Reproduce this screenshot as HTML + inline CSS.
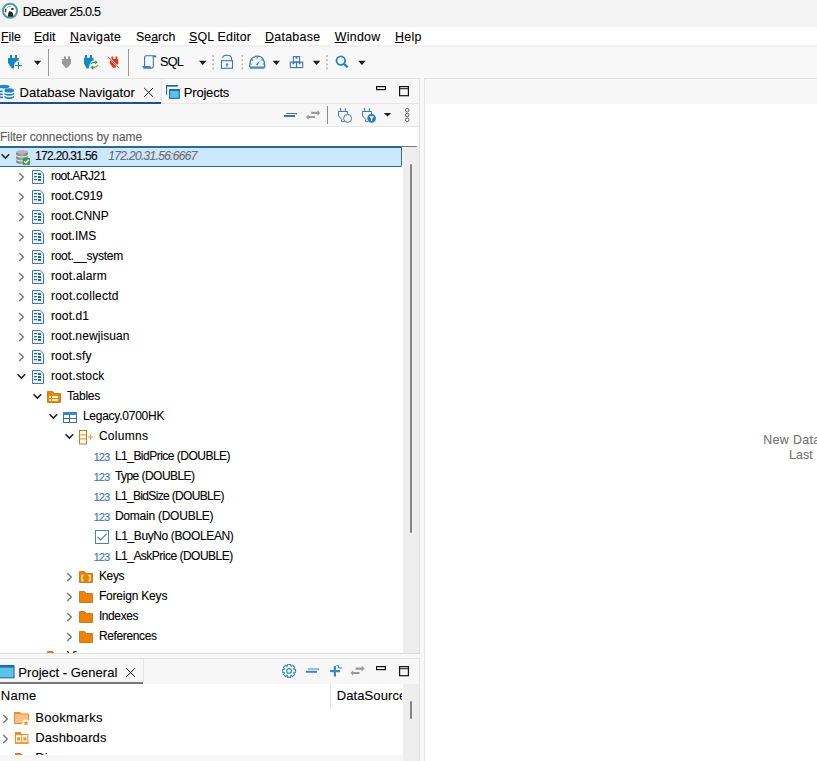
<!DOCTYPE html>
<html><head><meta charset="utf-8">
<style>
html,body{margin:0;padding:0;}
body{width:817px;height:761px;overflow:hidden;position:relative;background:#f8f8f8;font-family:"Liberation Sans",sans-serif;color:#1a1a1a;}
.a{position:absolute;}
.t{position:absolute;white-space:pre;font-size:12px;line-height:14px;-webkit-text-stroke:0.1px currentColor;}
.u{text-decoration:underline;text-underline-offset:1px;text-decoration-thickness:1px;}
svg{position:absolute;overflow:visible;}
</style></head><body>

<!-- Title bar -->
<div class="a" style="left:0;top:0;width:817px;height:27px;background:#f3f3f3;"></div>
<div class="a" style="left:0;top:26px;width:817px;height:1px;background:#f1f1f1;"></div>
<svg style="left:0;top:0" width="20" height="22" viewBox="0 0 20 22">
  <circle cx="10" cy="10.75" r="7" fill="#fff" stroke="#4a9fa8" stroke-width="2.1"/>
  <path d="M7.8 16.8 Q7.9 12.5 9.2 11.2 Q10.6 11 12.2 12.2 Q13.4 13 13.1 16.8 Z" fill="#2c2622"/>
  <ellipse cx="12.4" cy="8.9" rx="1.5" ry="0.9" fill="#262626"/>
  <path d="M4.9 9.2 L6.4 8.2 L6.2 12.6 L5 12 Z" fill="#3a3a3a"/>
  <path d="M7 7.6 Q8.5 6.2 10.8 6.4" fill="none" stroke="#9a9a9a" stroke-width="0.9"/>
</svg>
<div class="t" style="left:22.7px;top:4.8px;font-size:12.6px;letter-spacing:-0.7px;color:#000;">DBeaver 25.0.5</div>

<!-- Menu bar -->
<div class="a" style="left:0;top:27px;width:817px;height:18px;background:#fff;"></div>
<div class="t" style="left:1px;top:30px;font-size:12.4px;color:#000;"><span class="u">F</span>ile</div>
<div class="t" style="left:34px;top:30px;font-size:12.4px;color:#000;"><span class="u">E</span>dit</div>
<div class="t" style="left:70px;top:30px;font-size:12.4px;color:#000;letter-spacing:0.3px"><span class="u">N</span>avigate</div>
<div class="t" style="left:136px;top:30px;font-size:12.4px;color:#000;">Se<span class="u">a</span>rch</div>
<div class="t" style="left:189px;top:30px;font-size:12.4px;color:#000;letter-spacing:0.2px"><span class="u">S</span>QL Editor</div>
<div class="t" style="left:265px;top:30px;font-size:12.4px;color:#000;letter-spacing:0.3px"><span class="u">D</span>atabase</div>
<div class="t" style="left:334.7px;top:30px;font-size:12.4px;color:#000;letter-spacing:0.3px"><span class="u">W</span>indow</div>
<div class="t" style="left:395px;top:30px;font-size:12.4px;color:#000;letter-spacing:0.3px"><span class="u">H</span>elp</div>

<!-- Toolbar -->
<div class="a" style="left:0;top:45px;width:817px;height:2px;background:#f0f0f0;"></div>
<div class="a" style="left:0;top:47px;width:817px;height:31px;background:#f8f8f8;"></div>
<div class="a" style="left:0;top:78px;width:420px;height:1px;background:#e3e3e3;"></div>
<div class="a" style="left:424px;top:78px;width:393px;height:1px;background:#e3e3e3;"></div>
<div class="t" style="left:160px;top:55.3px;font-size:12.6px;letter-spacing:-0.7px;color:#000;">SQL</div>

<!-- Left top panel -->
<div class="a" style="left:0;top:79px;width:420px;height:575px;background:#f7f7f7;border-right:1px solid #e2e2e2;box-sizing:border-box;"></div>
<div class="a" style="left:0;top:103px;width:419px;height:1px;background:#e8e8e8;"></div>
<div class="a" style="left:0;top:126px;width:419px;height:1px;background:#e8e8e8;"></div>
<div class="a" style="left:0;top:102px;width:161px;height:2px;background:#1f4d96;"></div>
<div class="t" style="left:19.6px;top:85.5px;font-size:13px;letter-spacing:0.02px;color:#000;">Database Navigator</div>
<div class="t" style="left:183.8px;top:85.5px;font-size:13px;letter-spacing:-0.2px;color:#000;">Projects</div>
<!-- filter input -->
<div class="a" style="left:0;top:127px;width:417px;height:19px;background:#fff;border-bottom-right-radius:2px;"></div>
<div class="a" style="left:0;top:146px;width:417px;height:1px;background:#7c7c7c;border-radius:0 0 1px 0;"></div>
<div class="t" style="left:0;top:130px;font-size:12px;color:#5c5c5c;letter-spacing:-0.05px">Filter connections by name</div>
<!-- tree -->
<div class="a" style="left:0;top:147px;width:403px;height:506px;background:#fff;"></div>
<div class="a" style="left:-3px;top:146px;width:405px;height:21px;box-sizing:border-box;background:#cce8ff;border:1px solid #2e6792;border-top-width:2px;border-radius:2px;"></div>
<div class="a" style="left:0;top:147px;width:403px;height:506px;overflow:hidden;">
<div class="a" style="left:0;top:-147px;width:403px;height:800px;">
<svg style="left:-0.2px;top:151px" width="10" height="10" viewBox="0 0 10 10"><path d="M1.6 3.2 L5.4 7 L9.2 3.2" fill="none" stroke="#1e2a3a" stroke-width="1.6"/></svg>
<svg style="left:14px;top:149px" width="16" height="16" viewBox="0 0 16 16">
<defs><linearGradient id="dbg" x1="0" x2="1"><stop offset="0" stop-color="#7d7d7d"/><stop offset="0.5" stop-color="#a8a8a8"/><stop offset="1" stop-color="#7a7a7a"/></linearGradient></defs>
<ellipse cx="8" cy="2.8" rx="5.8" ry="1.8" fill="#b5b5b5"/>
<path d="M2.2 2.8 v2.6 a5.8 1.8 0 0 0 11.6 0 v-2.6 a5.8 1.8 0 0 1 -11.6 0z" fill="url(#dbg)"/>
<path d="M2.2 6.8 v2.6 a5.8 1.8 0 0 0 11.6 0 v-2.6 a5.8 1.8 0 0 1 -11.6 0z" fill="url(#dbg)"/>
<path d="M2.2 10.8 v2.4 a5.8 1.8 0 0 0 11.6 0 v-2.4 a5.8 1.8 0 0 1 -11.6 0z" fill="url(#dbg)"/>
<rect x="8.7" y="8.9" width="7.2" height="7" fill="#3e9b3e"/>
<path d="M10.2 12.4 L11.9 14 L14.6 10.7" fill="none" stroke="#fff" stroke-width="1.4"/>
</svg>
<div class="t" style="left:34.9px;top:146px;line-height:20px;font-size:12px;letter-spacing:-0.655px;color:#000;">172.20.31.56</div>
<div class="t" style="left:108.3px;top:146px;line-height:20px;font-size:12px;letter-spacing:-0.68px;color:#6a6a6a;font-style:italic;">172.20.31.56:6667</div>
<svg style="left:16.3px;top:172.2px" width="10" height="10" viewBox="0 0 10 10"><path d="M3.2 0.9 L7.3 5 L3.2 9.1" fill="none" stroke="#7b7b7b" stroke-width="1.45"/></svg>
<svg style="left:30px;top:169px" width="16" height="16" viewBox="0 0 16 16">
<path d="M2.5 1.5 H10.2 L13.5 4.8 V14.5 H2.5 Z" fill="#ecfbff" stroke="#4277a8" stroke-width="1"/>
<rect x="4" y="4" width="3" height="1.2" fill="#40607e"/><rect x="8" y="4" width="3" height="2" fill="#2070b8"/>
<rect x="4" y="7" width="3" height="1.2" fill="#40607e"/><rect x="8" y="7" width="3" height="2" fill="#3a5f80"/>
<rect x="4" y="10" width="3" height="1.2" fill="#40607e"/><rect x="8" y="10" width="3" height="2" fill="#2070b8"/>
</svg>
<div class="t" style="left:50.9px;top:166px;line-height:20px;font-size:12px;letter-spacing:-0.511px;color:#000;">root.ARJ21</div>
<svg style="left:16.3px;top:192.2px" width="10" height="10" viewBox="0 0 10 10"><path d="M3.2 0.9 L7.3 5 L3.2 9.1" fill="none" stroke="#7b7b7b" stroke-width="1.45"/></svg>
<svg style="left:30px;top:189px" width="16" height="16" viewBox="0 0 16 16">
<path d="M2.5 1.5 H10.2 L13.5 4.8 V14.5 H2.5 Z" fill="#ecfbff" stroke="#4277a8" stroke-width="1"/>
<rect x="4" y="4" width="3" height="1.2" fill="#40607e"/><rect x="8" y="4" width="3" height="2" fill="#2070b8"/>
<rect x="4" y="7" width="3" height="1.2" fill="#40607e"/><rect x="8" y="7" width="3" height="2" fill="#3a5f80"/>
<rect x="4" y="10" width="3" height="1.2" fill="#40607e"/><rect x="8" y="10" width="3" height="2" fill="#2070b8"/>
</svg>
<div class="t" style="left:50.9px;top:186px;line-height:20px;font-size:12px;letter-spacing:-0.1px;color:#000;">root.C919</div>
<svg style="left:16.3px;top:212.2px" width="10" height="10" viewBox="0 0 10 10"><path d="M3.2 0.9 L7.3 5 L3.2 9.1" fill="none" stroke="#7b7b7b" stroke-width="1.45"/></svg>
<svg style="left:30px;top:209px" width="16" height="16" viewBox="0 0 16 16">
<path d="M2.5 1.5 H10.2 L13.5 4.8 V14.5 H2.5 Z" fill="#ecfbff" stroke="#4277a8" stroke-width="1"/>
<rect x="4" y="4" width="3" height="1.2" fill="#40607e"/><rect x="8" y="4" width="3" height="2" fill="#2070b8"/>
<rect x="4" y="7" width="3" height="1.2" fill="#40607e"/><rect x="8" y="7" width="3" height="2" fill="#3a5f80"/>
<rect x="4" y="10" width="3" height="1.2" fill="#40607e"/><rect x="8" y="10" width="3" height="2" fill="#2070b8"/>
</svg>
<div class="t" style="left:50.9px;top:206px;line-height:20px;font-size:12px;letter-spacing:-0.025px;color:#000;">root.CNNP</div>
<svg style="left:16.3px;top:232.2px" width="10" height="10" viewBox="0 0 10 10"><path d="M3.2 0.9 L7.3 5 L3.2 9.1" fill="none" stroke="#7b7b7b" stroke-width="1.45"/></svg>
<svg style="left:30px;top:229px" width="16" height="16" viewBox="0 0 16 16">
<path d="M2.5 1.5 H10.2 L13.5 4.8 V14.5 H2.5 Z" fill="#ecfbff" stroke="#4277a8" stroke-width="1"/>
<rect x="4" y="4" width="3" height="1.2" fill="#40607e"/><rect x="8" y="4" width="3" height="2" fill="#2070b8"/>
<rect x="4" y="7" width="3" height="1.2" fill="#40607e"/><rect x="8" y="7" width="3" height="2" fill="#3a5f80"/>
<rect x="4" y="10" width="3" height="1.2" fill="#40607e"/><rect x="8" y="10" width="3" height="2" fill="#2070b8"/>
</svg>
<div class="t" style="left:50.9px;top:226px;line-height:20px;font-size:12px;letter-spacing:0.014px;color:#000;">root.IMS</div>
<svg style="left:16.3px;top:252.2px" width="10" height="10" viewBox="0 0 10 10"><path d="M3.2 0.9 L7.3 5 L3.2 9.1" fill="none" stroke="#7b7b7b" stroke-width="1.45"/></svg>
<svg style="left:30px;top:249px" width="16" height="16" viewBox="0 0 16 16">
<path d="M2.5 1.5 H10.2 L13.5 4.8 V14.5 H2.5 Z" fill="#ecfbff" stroke="#4277a8" stroke-width="1"/>
<rect x="4" y="4" width="3" height="1.2" fill="#40607e"/><rect x="8" y="4" width="3" height="2" fill="#2070b8"/>
<rect x="4" y="7" width="3" height="1.2" fill="#40607e"/><rect x="8" y="7" width="3" height="2" fill="#3a5f80"/>
<rect x="4" y="10" width="3" height="1.2" fill="#40607e"/><rect x="8" y="10" width="3" height="2" fill="#2070b8"/>
</svg>
<div class="t" style="left:50.9px;top:246px;line-height:20px;font-size:12px;letter-spacing:-0.25px;color:#000;">root.__system</div>
<svg style="left:16.3px;top:272.2px" width="10" height="10" viewBox="0 0 10 10"><path d="M3.2 0.9 L7.3 5 L3.2 9.1" fill="none" stroke="#7b7b7b" stroke-width="1.45"/></svg>
<svg style="left:30px;top:269px" width="16" height="16" viewBox="0 0 16 16">
<path d="M2.5 1.5 H10.2 L13.5 4.8 V14.5 H2.5 Z" fill="#ecfbff" stroke="#4277a8" stroke-width="1"/>
<rect x="4" y="4" width="3" height="1.2" fill="#40607e"/><rect x="8" y="4" width="3" height="2" fill="#2070b8"/>
<rect x="4" y="7" width="3" height="1.2" fill="#40607e"/><rect x="8" y="7" width="3" height="2" fill="#3a5f80"/>
<rect x="4" y="10" width="3" height="1.2" fill="#40607e"/><rect x="8" y="10" width="3" height="2" fill="#2070b8"/>
</svg>
<div class="t" style="left:50.9px;top:266px;line-height:20px;font-size:12px;letter-spacing:0.211px;color:#000;">root.alarm</div>
<svg style="left:16.3px;top:292.2px" width="10" height="10" viewBox="0 0 10 10"><path d="M3.2 0.9 L7.3 5 L3.2 9.1" fill="none" stroke="#7b7b7b" stroke-width="1.45"/></svg>
<svg style="left:30px;top:289px" width="16" height="16" viewBox="0 0 16 16">
<path d="M2.5 1.5 H10.2 L13.5 4.8 V14.5 H2.5 Z" fill="#ecfbff" stroke="#4277a8" stroke-width="1"/>
<rect x="4" y="4" width="3" height="1.2" fill="#40607e"/><rect x="8" y="4" width="3" height="2" fill="#2070b8"/>
<rect x="4" y="7" width="3" height="1.2" fill="#40607e"/><rect x="8" y="7" width="3" height="2" fill="#3a5f80"/>
<rect x="4" y="10" width="3" height="1.2" fill="#40607e"/><rect x="8" y="10" width="3" height="2" fill="#2070b8"/>
</svg>
<div class="t" style="left:50.9px;top:286px;line-height:20px;font-size:12px;letter-spacing:0.242px;color:#000;">root.collectd</div>
<svg style="left:16.3px;top:312.2px" width="10" height="10" viewBox="0 0 10 10"><path d="M3.2 0.9 L7.3 5 L3.2 9.1" fill="none" stroke="#7b7b7b" stroke-width="1.45"/></svg>
<svg style="left:30px;top:309px" width="16" height="16" viewBox="0 0 16 16">
<path d="M2.5 1.5 H10.2 L13.5 4.8 V14.5 H2.5 Z" fill="#ecfbff" stroke="#4277a8" stroke-width="1"/>
<rect x="4" y="4" width="3" height="1.2" fill="#40607e"/><rect x="8" y="4" width="3" height="2" fill="#2070b8"/>
<rect x="4" y="7" width="3" height="1.2" fill="#40607e"/><rect x="8" y="7" width="3" height="2" fill="#3a5f80"/>
<rect x="4" y="10" width="3" height="1.2" fill="#40607e"/><rect x="8" y="10" width="3" height="2" fill="#2070b8"/>
</svg>
<div class="t" style="left:50.9px;top:306px;line-height:20px;font-size:12px;letter-spacing:0.133px;color:#000;">root.d1</div>
<svg style="left:16.3px;top:332.2px" width="10" height="10" viewBox="0 0 10 10"><path d="M3.2 0.9 L7.3 5 L3.2 9.1" fill="none" stroke="#7b7b7b" stroke-width="1.45"/></svg>
<svg style="left:30px;top:329px" width="16" height="16" viewBox="0 0 16 16">
<path d="M2.5 1.5 H10.2 L13.5 4.8 V14.5 H2.5 Z" fill="#ecfbff" stroke="#4277a8" stroke-width="1"/>
<rect x="4" y="4" width="3" height="1.2" fill="#40607e"/><rect x="8" y="4" width="3" height="2" fill="#2070b8"/>
<rect x="4" y="7" width="3" height="1.2" fill="#40607e"/><rect x="8" y="7" width="3" height="2" fill="#3a5f80"/>
<rect x="4" y="10" width="3" height="1.2" fill="#40607e"/><rect x="8" y="10" width="3" height="2" fill="#2070b8"/>
</svg>
<div class="t" style="left:50.9px;top:326px;line-height:20px;font-size:12px;letter-spacing:0.092px;color:#000;">root.newjisuan</div>
<svg style="left:16.3px;top:352.2px" width="10" height="10" viewBox="0 0 10 10"><path d="M3.2 0.9 L7.3 5 L3.2 9.1" fill="none" stroke="#7b7b7b" stroke-width="1.45"/></svg>
<svg style="left:30px;top:349px" width="16" height="16" viewBox="0 0 16 16">
<path d="M2.5 1.5 H10.2 L13.5 4.8 V14.5 H2.5 Z" fill="#ecfbff" stroke="#4277a8" stroke-width="1"/>
<rect x="4" y="4" width="3" height="1.2" fill="#40607e"/><rect x="8" y="4" width="3" height="2" fill="#2070b8"/>
<rect x="4" y="7" width="3" height="1.2" fill="#40607e"/><rect x="8" y="7" width="3" height="2" fill="#3a5f80"/>
<rect x="4" y="10" width="3" height="1.2" fill="#40607e"/><rect x="8" y="10" width="3" height="2" fill="#2070b8"/>
</svg>
<div class="t" style="left:50.9px;top:346px;line-height:20px;font-size:12px;letter-spacing:0.171px;color:#000;">root.sfy</div>
<svg style="left:15.8px;top:371px" width="10" height="10" viewBox="0 0 10 10"><path d="M1.6 3.2 L5.4 7 L9.2 3.2" fill="none" stroke="#222" stroke-width="1.6"/></svg>
<svg style="left:30px;top:369px" width="16" height="16" viewBox="0 0 16 16">
<path d="M2.5 1.5 H10.2 L13.5 4.8 V14.5 H2.5 Z" fill="#ecfbff" stroke="#4277a8" stroke-width="1"/>
<rect x="4" y="4" width="3" height="1.2" fill="#40607e"/><rect x="8" y="4" width="3" height="2" fill="#2070b8"/>
<rect x="4" y="7" width="3" height="1.2" fill="#40607e"/><rect x="8" y="7" width="3" height="2" fill="#3a5f80"/>
<rect x="4" y="10" width="3" height="1.2" fill="#40607e"/><rect x="8" y="10" width="3" height="2" fill="#2070b8"/>
</svg>
<div class="t" style="left:50.9px;top:366px;line-height:20px;font-size:12px;letter-spacing:0.156px;color:#000;">root.stock</div>
<svg style="left:31.8px;top:391px" width="10" height="10" viewBox="0 0 10 10"><path d="M1.6 3.2 L5.4 7 L9.2 3.2" fill="none" stroke="#222" stroke-width="1.6"/></svg>
<svg style="left:46px;top:389px" width="16" height="16" viewBox="0 0 16 16">
<path d="M1.5 2.5 H6.5 L8.2 4.5 H14.5 V13.5 H1.5 Z" fill="#ef8300" stroke="#c97a35" stroke-width="1"/>
<rect x="3" y="7" width="2" height="2" fill="#fff6c8"/><rect x="6" y="7" width="6" height="2" fill="#fffbe8"/><rect x="3" y="10" width="2" height="2" fill="#fff6b0"/><rect x="6" y="10" width="6" height="2" fill="#fff6c0"/></svg>
<div class="t" style="left:66.9px;top:386px;line-height:20px;font-size:12px;letter-spacing:-0.28px;color:#000;">Tables</div>
<svg style="left:47.8px;top:411px" width="10" height="10" viewBox="0 0 10 10"><path d="M1.6 3.2 L5.4 7 L9.2 3.2" fill="none" stroke="#222" stroke-width="1.6"/></svg>
<svg style="left:62px;top:409px" width="16" height="16" viewBox="0 0 16 16">
<rect x="1.5" y="3.5" width="13" height="10" fill="#fff" stroke="#3a72a8" stroke-width="1"/>
<rect x="1" y="3" width="14" height="3" fill="#3b87c6"/>
<path d="M7.5 6 V14 M1.5 9.5 H14.5" stroke="#3a72a8" stroke-width="1"/>
</svg>
<div class="t" style="left:82.9px;top:406px;line-height:20px;font-size:12px;letter-spacing:-0.25px;color:#000;">Legacy.0700HK</div>
<svg style="left:63.8px;top:431px" width="10" height="10" viewBox="0 0 10 10"><path d="M1.6 3.2 L5.4 7 L9.2 3.2" fill="none" stroke="#222" stroke-width="1.6"/></svg>
<svg style="left:78px;top:429px" width="16" height="16" viewBox="0 0 16 16">
<rect x="1.5" y="1.5" width="7" height="13.5" fill="#fffbe6" stroke="#c27c38" stroke-width="1"/>
<rect x="2" y="5" width="6" height="1.6" fill="#f2b47a"/><rect x="2" y="9" width="6" height="1.6" fill="#f2b47a"/>
<path d="M10 8 H15 M12.5 5.2 V10.8" stroke="#f0962e" stroke-width="1.1"/>
</svg>
<div class="t" style="left:98.9px;top:426px;line-height:20px;font-size:12px;letter-spacing:0.283px;color:#000;">Columns</div>
<div class="t" style="left:93.7px;top:450px;font-size:10.6px;line-height:14px;color:#3b79b2;letter-spacing:-0.55px;-webkit-text-stroke:0.15px #3b79b2;">123</div>
<div class="t" style="left:114.9px;top:446px;line-height:20px;font-size:12px;letter-spacing:-0.511px;color:#000;">L1_BidPrice (DOUBLE)</div>
<div class="t" style="left:93.7px;top:470px;font-size:10.6px;line-height:14px;color:#3b79b2;letter-spacing:-0.55px;-webkit-text-stroke:0.15px #3b79b2;">123</div>
<div class="t" style="left:114.9px;top:466px;line-height:20px;font-size:12px;letter-spacing:-0.542px;color:#000;">Type (DOUBLE)</div>
<div class="t" style="left:93.7px;top:490px;font-size:10.6px;line-height:14px;color:#3b79b2;letter-spacing:-0.55px;-webkit-text-stroke:0.15px #3b79b2;">123</div>
<div class="t" style="left:114.9px;top:486px;line-height:20px;font-size:12px;letter-spacing:-0.656px;color:#000;">L1_BidSize (DOUBLE)</div>
<div class="t" style="left:93.7px;top:510px;font-size:10.6px;line-height:14px;color:#3b79b2;letter-spacing:-0.55px;-webkit-text-stroke:0.15px #3b79b2;">123</div>
<div class="t" style="left:114.9px;top:506px;line-height:20px;font-size:12px;letter-spacing:-0.236px;color:#000;">Domain (DOUBLE)</div>
<svg style="left:94px;top:529px" width="16" height="16" viewBox="0 0 16 16">
<rect x="1.5" y="1.5" width="13" height="13" fill="#fdfeff" stroke="#4a82b2" stroke-width="1"/>
<path d="M3.6 7.8 L6.6 11 L12.8 4.6" fill="none" stroke="#4a82b2" stroke-width="1.1"/>
</svg>
<div class="t" style="left:114.9px;top:526px;line-height:20px;font-size:12px;letter-spacing:-0.382px;color:#000;">L1_BuyNo (BOOLEAN)</div>
<div class="t" style="left:93.7px;top:550px;font-size:10.6px;line-height:14px;color:#3b79b2;letter-spacing:-0.55px;-webkit-text-stroke:0.15px #3b79b2;">123</div>
<div class="t" style="left:114.9px;top:546px;line-height:20px;font-size:12px;letter-spacing:-0.511px;color:#000;">L1_AskPrice (DOUBLE)</div>
<svg style="left:64.3px;top:572.2px" width="10" height="10" viewBox="0 0 10 10"><path d="M3.2 0.9 L7.3 5 L3.2 9.1" fill="none" stroke="#7b7b7b" stroke-width="1.45"/></svg>
<svg style="left:78px;top:569px" width="16" height="16" viewBox="0 0 16 16">
<path d="M1.5 2.5 H6.5 L8.2 4.5 H14.5 V13.5 H1.5 Z" fill="#ef8300" stroke="#c97a35" stroke-width="1"/>
<path d="M5.5 6.5 H4 V11.5 H5.5 M10.5 6.5 H12 V11.5 H10.5" fill="none" stroke="#fff6b8" stroke-width="1.3"/></svg>
<div class="t" style="left:98.9px;top:566px;line-height:20px;font-size:12px;letter-spacing:-0.333px;color:#000;">Keys</div>
<svg style="left:64.3px;top:592.2px" width="10" height="10" viewBox="0 0 10 10"><path d="M3.2 0.9 L7.3 5 L3.2 9.1" fill="none" stroke="#7b7b7b" stroke-width="1.45"/></svg>
<svg style="left:78px;top:589px" width="16" height="16" viewBox="0 0 16 16">
<path d="M1.5 2.5 H6.5 L8.2 4.5 H14.5 V13.5 H1.5 Z" fill="#ef8300" stroke="#c97a35" stroke-width="1"/>
</svg>
<div class="t" style="left:98.9px;top:586px;line-height:20px;font-size:12px;letter-spacing:-0.2px;color:#000;">Foreign Keys</div>
<svg style="left:64.3px;top:612.2px" width="10" height="10" viewBox="0 0 10 10"><path d="M3.2 0.9 L7.3 5 L3.2 9.1" fill="none" stroke="#7b7b7b" stroke-width="1.45"/></svg>
<svg style="left:78px;top:609px" width="16" height="16" viewBox="0 0 16 16">
<path d="M1.5 2.5 H6.5 L8.2 4.5 H14.5 V13.5 H1.5 Z" fill="#ef8300" stroke="#c97a35" stroke-width="1"/>
</svg>
<div class="t" style="left:98.9px;top:606px;line-height:20px;font-size:12px;letter-spacing:-0.4px;color:#000;">Indexes</div>
<svg style="left:64.3px;top:632.2px" width="10" height="10" viewBox="0 0 10 10"><path d="M3.2 0.9 L7.3 5 L3.2 9.1" fill="none" stroke="#7b7b7b" stroke-width="1.45"/></svg>
<svg style="left:78px;top:629px" width="16" height="16" viewBox="0 0 16 16">
<path d="M1.5 2.5 H6.5 L8.2 4.5 H14.5 V13.5 H1.5 Z" fill="#ef8300" stroke="#c97a35" stroke-width="1"/>
</svg>
<div class="t" style="left:98.9px;top:626px;line-height:20px;font-size:12px;letter-spacing:-0.356px;color:#000;">References</div>
<svg style="left:46px;top:649px" width="16" height="16" viewBox="0 0 16 16">
<path d="M1.5 2.5 H6.5 L8.2 4.5 H14.5 V13.5 H1.5 Z" fill="#ef8300" stroke="#c97a35" stroke-width="1"/>
</svg>
<div class="t" style="left:66.9px;top:646px;line-height:20px;font-size:12px;letter-spacing:-0.2px;color:#000;">Views</div>
</div></div>
<div class="a" style="left:403px;top:147px;width:16px;height:506px;background:#eeeeee;"></div>
<div class="a" style="left:410px;top:164px;width:2px;height:369px;background:#858585;border-radius:1px;"></div>
<div class="a" style="left:0;top:653px;width:420px;height:1px;background:#dcdcdc;"></div>

<!-- Right panel -->
<div class="a" style="left:424px;top:79px;width:393px;height:682px;background:#fff;border-left:1px solid #e4e4e4;box-sizing:border-box;"></div>
<div class="a" style="left:425px;top:79px;width:392px;height:25px;background:#f7f7f7;"></div>
<div class="t" style="left:763.3px;top:432.5px;font-size:12.4px;letter-spacing:0.35px;color:#737373;">New Data</div>
<div class="t" style="left:789px;top:447.5px;font-size:12.4px;letter-spacing:0.1px;color:#737373;">Last</div>

<!-- Bottom left panel -->
<div class="a" style="left:0;top:658px;width:420px;height:103px;background:#f7f7f7;border-top:1px solid #e2e2e2;border-right:1px solid #e2e2e2;box-sizing:border-box;"></div>
<div class="a" style="left:0;top:682px;width:143px;height:2px;background:#777;"></div>
<div class="t" style="left:18.3px;top:666.2px;font-size:13px;letter-spacing:0.05px;color:#000;">Project - General</div>

<div class="a" style="left:0;top:684px;width:403px;height:71px;background:#fff;overflow:hidden;">
<div class="a" style="left:0;top:-684px;width:403px;height:800px;">
<svg style="left:0px;top:714.2px" width="10" height="10" viewBox="0 0 10 10"><path d="M3.2 0.9 L7.3 5 L3.2 9.1" fill="none" stroke="#7b7b7b" stroke-width="1.45"/></svg>
<svg style="left:14px;top:711px" width="16" height="16" viewBox="0 0 16 16">
<path d="M0.5 1.5 H5.5 L7 3 H14.5 V12.5 H0.5 Z" fill="#ffc08a" stroke="#f08a24" stroke-width="1"/>
<path d="M0.5 1 H6 L7.5 3 H1 Z" fill="#f08a24"/>
<circle cx="12" cy="12" r="3.6" fill="#fff"/>
<path d="M12 9.2 L12.8 11.2 L14.8 11.3 L13.2 12.5 L13.8 14.6 L12 13.4 L10.2 14.6 L10.8 12.5 L9.2 11.3 L11.2 11.2 Z" fill="#f08a24"/>
</svg>
<div class="t" style="left:35.2px;top:708.2px;line-height:20px;font-size:13px;letter-spacing:0.287px;color:#000;">Bookmarks</div>
<svg style="left:0px;top:734.2px" width="10" height="10" viewBox="0 0 10 10"><path d="M3.2 0.9 L7.3 5 L3.2 9.1" fill="none" stroke="#7b7b7b" stroke-width="1.45"/></svg>
<svg style="left:14px;top:731px" width="16" height="16" viewBox="0 0 16 16">
<rect x="1" y="1" width="6.3" height="2.6" fill="#f08a24"/>
<rect x="1.5" y="3.5" width="12.4" height="8.6" fill="#fffbe6" stroke="#f08a24" stroke-width="1"/>
<rect x="1" y="11.3" width="13.4" height="1.4" fill="#f08a24"/>
<path d="M7.7 4 V11.5" stroke="#f08a24" stroke-width="1"/>
<rect x="3" y="6.3" width="3" height="3.2" fill="#f09030"/>
<rect x="9.3" y="6.3" width="3" height="3.2" fill="#f09030"/>
</svg>
<div class="t" style="left:35.2px;top:728.2px;line-height:20px;font-size:13px;letter-spacing:0.133px;color:#000;">Dashboards</div>
<svg style="left:14px;top:751px" width="16" height="16" viewBox="0 0 16 16">
<path d="M1.5 2.5 H6.5 L8.2 4.5 H14.5 V13.5 H1.5 Z" fill="#ef8300" stroke="#c97a35" stroke-width="1"/>
</svg>
<div class="t" style="left:35.2px;top:748.2px;line-height:20px;font-size:13px;letter-spacing:0.2px;color:#000;">Diagrams</div>
<div class="a" style="left:330px;top:684px;width:1px;height:24px;background:#e2e2e2;"></div>
<div class="t" style="left:0.8px;top:689.2px;font-size:13px;letter-spacing:0.27px;color:#000;">Name</div>
<div class="a" style="left:336.7px;top:684px;width:65px;height:24px;overflow:hidden;"><div class="t" style="left:0;top:5.2px;font-size:13px;letter-spacing:0.1px;color:#000;">DataSource</div></div>
</div></div>
<div class="a" style="left:403px;top:684px;width:16px;height:77px;background:#eeeeee;"></div>
<div class="a" style="left:410px;top:701px;width:2px;height:18px;background:#858585;border-radius:1px;"></div>

<svg style="left:0;top:0" width="817" height="761" viewBox="0 0 817 761">
<!-- main toolbar -->
<!-- plug + -->
<g fill="#1287c9">
  <rect x="10" y="55" width="2" height="3.2"/><rect x="15" y="55" width="2" height="3.2"/>
  <path d="M8 58 H18.8 V60.2 Q15.2 61.2 14.2 64.5 L13.8 68.6 H11.8 L8 63 Z"/>
</g>
<path d="M15 65.5 H22 M18.5 62 V69" stroke="#2a9a44" stroke-width="1.1" fill="none"/>
<path d="M33.8 60.8 H41.2 L37.5 65 Z" fill="#1b1b1b"/>
<rect x="48" y="49" width="1" height="27" fill="#9a9a9a"/>
<!-- gray plug -->
<g fill="#9a9a9a">
  <rect x="64" y="56.3" width="2" height="3"/><rect x="68" y="56.3" width="2" height="3"/>
  <path d="M62 59 H71 V63.5 L67.5 67.7 H65.5 L62 63.5 Z"/>
</g>
<!-- blue plug refresh -->
<g fill="#1287c9">
  <rect x="85" y="55" width="2" height="3"/><rect x="90" y="55" width="2" height="3"/>
  <path d="M84 57.7 H93.6 V60 Q90.5 61 89.6 64.5 L88.7 68.6 H86.7 L84 63.5 Z"/>
</g>
<g stroke="#2a9a44" stroke-width="1.05" fill="none">
  <path d="M90.5 64.3 Q92 62.2 96.5 62.3"/><path d="M95 60.8 L97 62.3 L95 63.8"/>
  <path d="M97.8 65.3 Q96.5 67.6 91.8 67.5"/><path d="M93.3 66 L91.3 67.5 L93.3 69"/>
</g>
<!-- red plug disconnect -->
<g fill="#e8321e">
  <rect x="111.4" y="56.5" width="1.8" height="3"/><rect x="115.5" y="56.5" width="1.8" height="3"/>
  <path d="M109.8 59 H118.3 V63.5 L115.5 67.7 H113 L109.8 63.5 Z"/>
</g>
<path d="M108 56.6 L119.2 68.2" stroke="#f8f8f8" stroke-width="1.7"/>
<path d="M108 56.6 L119.2 68.2" stroke="#6e3a34" stroke-width="0.8"/>
<rect x="128" y="49" width="1" height="27" fill="#9a9a9a"/>
<!-- SQL scroll -->
<g fill="none" stroke="#3a78b0" stroke-width="1.1">
  <path d="M144.6 66.5 V57 Q144.6 55.7 146 55.7 H155.2 L155.8 56.6 H153.3 V66 Q153.3 68.2 151.5 68.2 Q150.2 68.2 149.8 66.5"/>
</g>
<path d="M142.2 66 H150 Q150.3 67.5 151.4 68.8 H143.5 Z" fill="#3a80bc"/>
<path d="M199 60.8 H206.4 L202.7 65 Z" fill="#1b1b1b"/>
<g fill="#ababab">
  <rect x="212.3" y="55.2" width="1.6" height="1.6"/><rect x="212.3" y="59.4" width="1.6" height="1.6"/><rect x="212.3" y="63.5" width="1.6" height="1.6"/><rect x="212.3" y="67.6" width="1.6" height="1.6"/>
  <rect x="241.5" y="55.2" width="1.6" height="1.6"/><rect x="241.5" y="59.4" width="1.6" height="1.6"/><rect x="241.5" y="63.5" width="1.6" height="1.6"/><rect x="241.5" y="67.6" width="1.6" height="1.6"/>
  <rect x="326.1" y="55.2" width="1.6" height="1.6"/><rect x="326.1" y="59.4" width="1.6" height="1.6"/><rect x="326.1" y="63.5" width="1.6" height="1.6"/><rect x="326.1" y="67.6" width="1.6" height="1.6"/>
</g>
<!-- lock -->
<g fill="none" stroke="#3a78b0" stroke-width="1.1">
  <rect x="221.5" y="60.7" width="11" height="7.6"/>
  <path d="M222.6 58 Q223 55.2 227 55.2 Q231.5 55.2 231.6 58.5 V60.7"/>
</g>
<path d="M227 63 L225.3 64.8 H226.4 V67 H227.6 V64.8 H228.7 Z" fill="#3a80bc"/>
<!-- gauge -->
<g fill="none" stroke="#3a78b0" stroke-width="1.2">
  <path d="M249.7 67 Q249.5 56.2 257.2 56.2 Q265 56.2 264.8 67 Z"/>
  <path d="M257.2 57 V58.5 M252 59.5 L253 60.5 M262.5 59.5 L261.5 60.5 M250.5 64 H252 M264 64 H262.5"/>
</g>
<path d="M255.8 64.6 L260.2 60.5 L257.6 65.3 Z" fill="#3a78b0"/>
<rect x="250" y="67.2" width="14.5" height="1.5" fill="#3a80bc"/>
<path d="M272.6 60.8 H280 L276.3 65 Z" fill="#1b1b1b"/>
<!-- boxes -->
<g fill="none" stroke="#3a78b0" stroke-width="1.1">
  <rect x="293.4" y="56.6" width="6.2" height="5.5"/><rect x="290.3" y="62.1" width="6.2" height="5.5"/><rect x="296.5" y="62.1" width="6.2" height="5.5"/>
</g>
<path d="M295.6 56.8 h1.8 v2 h-1.8z M292.5 62.3 h1.8 v2 h-1.8z M298.7 62.3 h1.8 v2 h-1.8z" fill="#3a78b0"/>
<path d="M312.8 60.8 H320.2 L316.5 65 Z" fill="#1b1b1b"/>
<!-- search -->
<circle cx="340.8" cy="60.6" r="4.3" fill="none" stroke="#1a88c8" stroke-width="1.8"/>
<path d="M343.8 63.6 L347.6 67.4" stroke="#1a88c8" stroke-width="2.2"/>
<path d="M358.2 60.8 H365.6 L361.9 65 Z" fill="#1b1b1b"/>

<!-- left panel tab row -->
<g fill="#1a88c8">
  <ellipse cx="3.8" cy="86.6" rx="5.8" ry="1.9"/>
  <path d="M0 90.4 h2.6 v1.8 h-2.6z M0 93.4 h2.6 v1.8 h-2.6z M0 96.4 h3 v1.8 h-3z"/>
  <ellipse cx="9.2" cy="90.4" rx="4.8" ry="2.1"/>
  <path d="M4.4 92.9 Q9.2 95.3 14 92.9 V94.6 Q9.2 97 4.4 94.6Z"/>
  <path d="M4.4 96 Q9.2 98.4 14 96 V97.7 Q9.2 100.1 4.4 97.7Z"/>
</g>
<path d="M144.2 88 L153 96.8 M153 88 L144.2 96.8" stroke="#111" stroke-width="1"/>
<rect x="161" y="79" width="1" height="24" fill="#e6e6e6"/>
<g>
  <path d="M166.6 94.8 V85.8" fill="none" stroke="#1d6f9e" stroke-width="1.1"/>
  <rect x="166" y="85" width="11.8" height="1.7" fill="#1d6f9e"/>
  <rect x="169.6" y="89.7" width="9.7" height="8.6" fill="#5cc2ec" stroke="#1d6f9e" stroke-width="1.1"/>
  <rect x="169" y="89.2" width="11" height="1.8" fill="#1d6f9e"/>
</g>
<rect x="376.6" y="86.6" width="8.8" height="3" fill="none" stroke="#111" stroke-width="1.2"/>
<rect x="399.6" y="86.6" width="8.8" height="9.1" fill="none" stroke="#111" stroke-width="1.2"/>
<rect x="399" y="88.2" width="10" height="1" fill="#111"/>

<!-- left panel toolbar -->
<path d="M286.2 113.5 H296.5 V114.5" fill="none" stroke="#3a78a8" stroke-width="1.1"/>
<rect x="284" y="115" width="11" height="2" fill="#3a78a8"/>
<g fill="#9a9a9a">
  <path d="M311.2 111.8 H317.5 V110 L320.2 112.9 L317.5 115.8 V114 H311.2 Z"/>
  <path d="M315 116 H308.7 V114.3 L306 117.1 L308.7 119.8 V118.1 H315 Z"/>
</g>
<rect x="327" y="106" width="1" height="18" fill="#8a8a8a"/>
<g fill="none" stroke="#3a78b0" stroke-width="1">
  <path d="M340.7 108 V111.3 M345.3 108 V111.3"/>
  <path d="M347.5 114.3 V111.5 H338.5 V116 L341.7 119.3 V121.7 H344"/>
</g>
<circle cx="347.6" cy="118.4" r="4" fill="#fdfeff" stroke="#3a78b0" stroke-width="1"/>
<g fill="none" stroke="#3a78b0" stroke-width="1">
  <path d="M364.7 108 V111.3 M369.3 108 V111.3"/>
  <path d="M371.5 114.3 V111.5 H362.5 V116 L365.7 119.3 V121.7 H368"/>
</g>
<circle cx="371.6" cy="118.4" r="4.3" fill="#2a7cc0"/>
<path d="M369.2 116.3 H374 L372.2 118.6 V121 H371 V118.6 Z" fill="#fff"/>
<path d="M383.8 112.9 H391.2 L387.5 116.6 Z" fill="#1b1b1b"/>
<g fill="none" stroke="#555" stroke-width="0.9">
  <circle cx="407.2" cy="110.2" r="1.8"/><circle cx="407.2" cy="115" r="1.8"/><circle cx="407.2" cy="119.8" r="1.8"/>
</g>

<!-- bottom panel tab row -->
<g>
  <rect x="-1" y="665.5" width="15" height="12.3" fill="#5cc2ec" stroke="#1d6f9e" stroke-width="1.1"/>
  <rect x="-1" y="665" width="15" height="2.6" fill="#1d6f9e"/>
</g>
<path d="M126.2 668.2 L135 677 M135 668.2 L126.2 677" stroke="#111" stroke-width="1"/>
<rect x="143" y="659" width="1" height="24" fill="#e6e6e6"/>
<!-- gear -->
<g fill="none" stroke="#3a88c8" stroke-width="1.1">
  <path d="M295.54 669.46 L295.54 672.34 L293.78 672.66 L293.65 672.96 L294.67 674.44 L292.64 676.47 L291.16 675.45 L290.86 675.58 L290.54 677.34 L287.66 677.34 L287.34 675.58 L287.04 675.45 L285.56 676.47 L283.53 674.44 L284.55 672.96 L284.42 672.66 L282.66 672.34 L282.66 669.46 L284.42 669.14 L284.55 668.84 L283.53 667.36 L285.56 665.33 L287.04 666.35 L287.34 666.22 L287.66 664.46 L290.54 664.46 L290.86 666.22 L291.16 666.35 L292.64 665.33 L294.67 667.36 L293.65 668.84 L293.78 669.14 Z"/>
  <circle cx="289.1" cy="670.9" r="2.3"/>
</g>
<path d="M308.2 669 H318.5 V670" fill="none" stroke="#3a88c8" stroke-width="1.1"/>
<rect x="306" y="670.8" width="11" height="2" fill="#3a88c8"/>
<g fill="#3a88c8">
  <rect x="330" y="670" width="10" height="2.2"/><rect x="333.8" y="666" width="2.2" height="10.5"/>
</g>
<path d="M336.5 665.5 H338.5 V668 H342" fill="none" stroke="#3a88c8" stroke-width="1"/>
<g fill="#9a9a9a">
  <path d="M355.5 667.5 H361.8 V665.7 L364.6 668.6 L361.8 671.5 V669.7 H355.5 Z"/>
  <path d="M359.5 672 H353.2 V670.3 L350.5 673.1 L353.2 675.8 V674.1 H359.5 Z"/>
</g>
<rect x="376.6" y="666.6" width="8.8" height="3" fill="none" stroke="#111" stroke-width="1.2"/>
<rect x="399.6" y="666.6" width="8.8" height="9.1" fill="none" stroke="#111" stroke-width="1.2"/>
<rect x="399" y="668.2" width="10" height="1" fill="#111"/>
</svg>

</body></html>
